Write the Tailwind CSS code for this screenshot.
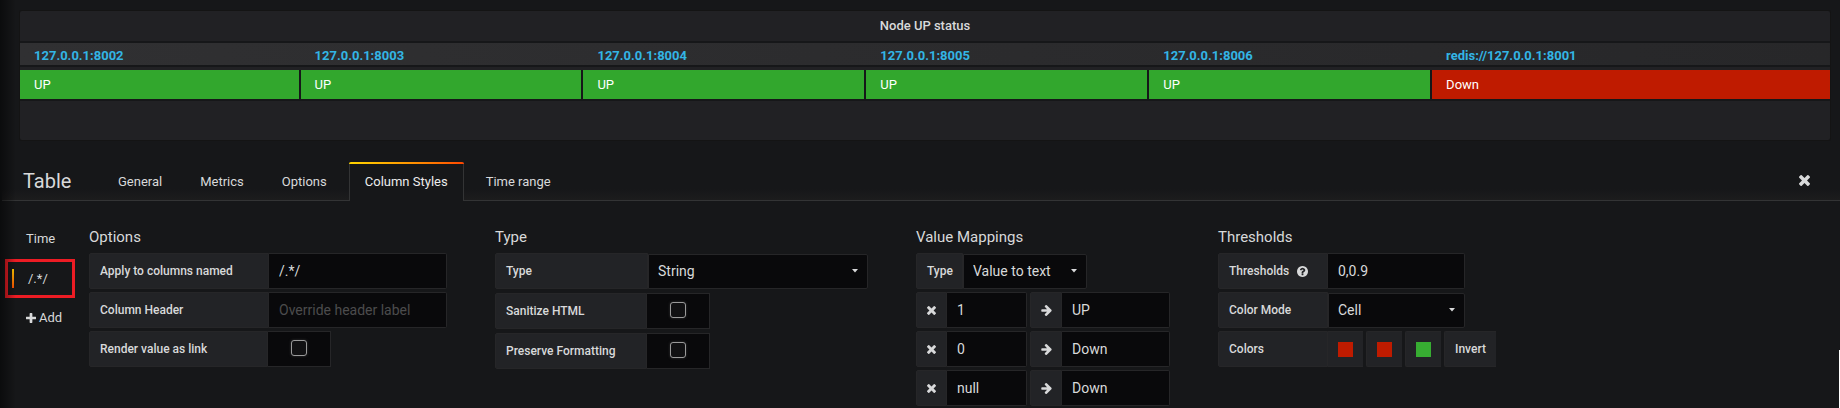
<!DOCTYPE html>
<html lang="en">
<head>
<meta charset="utf-8">
<meta name="viewport" content="width=device-width, initial-scale=1">
<title>Node UP status</title>
<script src="https://cdn.jsdelivr.net/npm/@tailwindcss/browser@4"></script>
</head>
<body class="relative min-h-screen overflow-x-hidden bg-[#161719] font-[Roboto,sans-serif] text-[13px] text-[#d8d9da]">
<svg class="hidden" aria-hidden="true">
  <symbol id="times" viewBox="302 366 1188 1188"><path fill="currentColor" d="M1490 1322q0 40-28 68l-136 136q-28 28-68 28t-68-28l-294-294-294 294q-28 28-68 28t-68-28l-136-136q-28-28-28-68t28-68l294-294-294-294q-28-28-28-68t28-68l136-136q28-28 68-28t68 28l294 294 294-294q28-28 68-28t68 28l136 136q28 28 28 68t-28 68l-294 294 294 294q28 28 28 68z"/></symbol>
  <symbol id="arrow" viewBox="-40 180 1560 1560"><path fill="currentColor" d="M1472 960q0 54-37 91l-651 651q-39 37-91 37-51 0-90-37l-75-75q-38-38-38-91t38-91l293-293h-704q-52 0-84.500-37.500t-32.500-90.500v-128q0-53 32.500-90.500t84.500-37.500h704l-293-294q-38-36-38-90t38-90l75-75q38-38 90-38 53 0 91 38l651 651q37 35 37 90z"/></symbol>
  <symbol id="caret" viewBox="0 0 6 4"><path d="M0 0H6L3 3.6Z" fill="currentColor"/></symbol>
</svg>
<div class="pointer-events-none absolute inset-y-0 left-0 w-4 bg-linear-to-r from-black/50 to-transparent"></div>
<div class="pointer-events-none absolute right-0 bottom-0 h-[58px] w-px bg-white"></div>

<section class="mx-5 mr-[10px] pt-[11px]">
  <div class="h-[129px] rounded-xs bg-[#212124] shadow-[0_0_0_1px_#141414]">
    <h1 class="flex h-[30px] items-center justify-center text-[13px] font-medium">Node UP status</h1>
    <table class="w-full table-fixed border-separate border-spacing-0 border-t-2 border-[#161719] text-left">
      <colgroup>
        <col class="w-[15.5%]"><col class="w-[15.63%]"><col class="w-[15.63%]"><col class="w-[15.63%]"><col class="w-[15.63%]"><col>
      </colgroup>
      <thead class="bg-linear-to-r from-[#303032] to-[#272729] text-[13px] text-[#33b5e5]">
        <tr>
          <th scope="col" class="border-b-2 border-[#161719] pt-1 pl-[14px] leading-[18px] font-bold">127.0.0.1:8002</th>
          <th scope="col" class="border-b-2 border-[#161719] pt-1 pl-[14px] leading-[18px] font-bold">127.0.0.1:8003</th>
          <th scope="col" class="border-b-2 border-[#161719] pt-1 pl-[14px] leading-[18px] font-bold">127.0.0.1:8004</th>
          <th scope="col" class="border-b-2 border-[#161719] pt-1 pl-[14px] leading-[18px] font-bold">127.0.0.1:8005</th>
          <th scope="col" class="border-b-2 border-[#161719] pt-1 pl-[14px] leading-[18px] font-bold">127.0.0.1:8006</th>
          <th scope="col" class="border-b-2 border-[#161719] pt-1 pl-[14px] leading-[18px] font-bold">redis://127.0.0.1:8001</th>
        </tr>
      </thead>
      <tbody class="leading-[29px] text-white before:block before:h-[3px] before:content-['']">
        <tr>
          <td class="border-r-2 border-b-2 border-[#161719] bg-[#32a72d] pl-[14px]">UP</td>
          <td class="border-r-2 border-b-2 border-[#161719] bg-[#32a72d] pl-[14px]">UP</td>
          <td class="border-r-2 border-b-2 border-[#161719] bg-[#32a72d] pl-[14px]">UP</td>
          <td class="border-r-2 border-b-2 border-[#161719] bg-[#32a72d] pl-[14px]">UP</td>
          <td class="border-r-2 border-b-2 border-[#161719] bg-[#32a72d] pl-[14px]">UP</td>
          <td class="border-b-2 border-[#161719] bg-[#bf1b00] pl-[14px]">Down</td>
        </tr>
      </tbody>
    </table>
  </div>
</section>

<header class="mt-[22px] ml-[2px] flex h-[39px] items-stretch border-b border-[#333435] bg-linear-to-b from-[#161719] from-70% to-[#1c1c1d] pr-[30px] pl-[21px]">
  <h2 class="flex w-[79px] items-center text-[20px]">Table</h2>
  <nav class="flex gap-[6px] text-[13px]">
    <a href="#general" class="flex items-center px-4 pt-[2px]">General</a>
    <a href="#metrics" class="flex items-center px-4 pt-[2px]">Metrics</a>
    <a href="#options" class="flex items-center px-4 pt-[2px]">Options</a>
    <a href="#styles" aria-current="page" class="relative -mb-px flex items-center rounded-t-xs border-x border-[#333435] bg-[#161719] px-[15px] pt-px text-[#ececec] before:absolute before:-inset-x-px before:top-0 before:h-[2px] before:rounded-t-xs before:bg-linear-to-r before:from-[#ffd500] before:via-[#ff9900] before:to-[#ff4400]">Column Styles</a>
    <a href="#range" class="flex items-center px-4 pt-[2px]">Time range</a>
  </nav>
  <button type="button" aria-label="Close" class="ml-auto pb-[2px]"><svg class="size-[11px]"><use href="#times"/></svg></button>
</header>

<main class="flex items-start">
  <aside class="flex w-[89px] shrink-0 flex-col pt-[26px] pl-[5px] text-[13px]">
    <a href="#time" class="pl-[21px] leading-6">Time</a>
    <a href="#pattern" aria-current="true" class="mt-2 flex h-[39px] w-[70px] items-center border-[3px] border-[#ed1c24] pl-1"><span class="h-[19px] w-[2px] bg-linear-to-b from-[#ffc800] to-[#ff4d00]"></span><span class="ml-[14px]">/.*/</span></a>
    <button type="button" class="mt-2 flex items-center gap-[3px] pl-[21px] leading-6"><svg class="size-[10px]" viewBox="192 128 1408 1408"><path fill="currentColor" d="M1600 736v192q0 40-28 68t-68 28h-416v416q0 40-28 68t-68 28h-192q-40 0-68-28t-28-68v-416h-416q-40 0-68-28t-28-68v-192q0-40 28-68t68-28h416v-416q0-40 28-68t68-28h192q40 0 68 28t28 68v416h416q40 0 68 28t28 68z"/></svg>Add</button>
  </aside>

  <section class="w-[406px] shrink-0 pt-[26px]">
    <h3 class="mb-[6px] text-[15px] leading-5">Options</h3>
    <div class="grid w-[358px] grid-cols-1 gap-[3px]">
      <div class="flex h-9">
        <label for="apply" class="flex w-[180px] items-center rounded-l-xs border border-[#262628] bg-[#222326] px-[10px] text-[12px] font-medium">Apply to columns named</label>
        <input id="apply" value="/.*/" class="min-w-0 flex-1 rounded-r-xs border border-l-0 border-[#262628] bg-[#09090b] px-[10px] text-[14px]">
      </div>
      <div class="flex h-9">
        <label for="header" class="flex w-[180px] items-center rounded-l-xs border border-[#262628] bg-[#222326] px-[10px] text-[12px] font-medium">Column Header</label>
        <input id="header" placeholder="Override header label" class="min-w-0 flex-1 rounded-r-xs border border-l-0 border-[#262628] bg-[#09090b] px-[10px] text-[14px] placeholder:text-[#4c4c4d]">
      </div>
      <div class="flex h-9">
        <label for="link" class="flex w-[179px] items-center rounded-l-xs border border-[#262628] bg-[#222326] px-[10px] text-[12px] font-medium">Render value as link</label>
        <span class="flex w-[63px] items-start justify-center border border-l-0 border-[#262628] bg-[#09090b] pt-2"><input id="link" type="checkbox" class="size-4 appearance-none rounded-[3px] border border-[#9a9a9a] bg-[#111113] shadow-[0_0_3px_#333] checked:bg-[#33b5e5]"></span>
      </div>
    </div>
  </section>

  <section class="w-[421px] shrink-0 pt-[26px]">
    <h3 class="mb-[6px] text-[15px] leading-5">Type</h3>
    <div class="grid w-[373px] grid-cols-1 gap-1">
      <div class="flex h-9">
        <label for="type" class="flex w-[153px] items-center rounded-l-xs border border-[#262628] bg-[#222326] px-[10px] text-[12px] font-medium">Type</label>
        <div class="relative mt-px flex-1">
          <select id="type" class="size-full appearance-none rounded-r-xs border border-[#262628] bg-[#09090b] px-[9px] text-[14px]"><option>String</option></select>
          <svg class="pointer-events-none absolute top-[15px] right-[10px] h-1 w-[6px]"><use href="#caret"/></svg>
        </div>
      </div>
      <div class="flex h-9">
        <label for="sanitize" class="flex w-[152px] items-center rounded-l-xs border border-[#262628] bg-[#222326] px-[10px] text-[12px] font-medium">Sanitize HTML</label>
        <span class="flex w-[63px] items-start justify-center border border-l-0 border-[#262628] bg-[#09090b] pt-2"><input id="sanitize" type="checkbox" class="size-4 appearance-none rounded-[3px] border border-[#9a9a9a] bg-[#111113] shadow-[0_0_3px_#333] checked:bg-[#33b5e5]"></span>
      </div>
      <div class="flex h-9">
        <label for="preserve" class="flex w-[152px] items-center rounded-l-xs border border-[#262628] bg-[#222326] px-[10px] text-[12px] font-medium">Preserve Formatting</label>
        <span class="flex w-[63px] items-start justify-center border border-l-0 border-[#262628] bg-[#09090b] pt-2"><input id="preserve" type="checkbox" class="size-4 appearance-none rounded-[3px] border border-[#9a9a9a] bg-[#111113] shadow-[0_0_3px_#333] checked:bg-[#33b5e5]"></span>
      </div>
    </div>
  </section>

  <section class="w-[302px] shrink-0 pt-[26px]">
    <h3 class="mb-[6px] text-[15px] leading-5">Value Mappings</h3>
    <div class="grid w-[254px] grid-cols-1 gap-[3px]">
      <div class="flex h-9">
        <label for="maptype" class="flex w-[47px] items-center rounded-l-xs border border-[#262628] bg-[#222326] px-[10px] text-[12px] font-medium">Type</label>
        <div class="relative mt-px w-[124px]">
          <select id="maptype" class="size-full appearance-none rounded-r-xs border border-[#262628] bg-[#09090b] px-[9px] text-[14px]"><option>Value to text</option></select>
          <svg class="pointer-events-none absolute top-[15px] right-[10px] h-1 w-[6px]"><use href="#caret"/></svg>
        </div>
      </div>
      <div class="flex h-9">
        <button type="button" aria-label="Remove mapping" class="flex w-[31px] items-center justify-center rounded-l-xs border border-[#262628] bg-[#222326]"><svg class="size-[9px]"><use href="#times"/></svg></button>
        <input aria-label="Value" value="1" class="w-20 rounded-r-xs border border-l-0 border-[#262628] bg-[#09090b] px-[10px] text-[14px]">
        <span class="ml-[3px] flex w-8 items-center justify-center rounded-l-xs border border-[#262628] bg-[#222326]"><svg class="size-[11px]"><use href="#arrow"/></svg></span>
        <input aria-label="Text" value="UP" class="min-w-0 flex-1 rounded-r-xs border border-l-0 border-[#262628] bg-[#09090b] px-[10px] text-[14px]">
      </div>
      <div class="flex h-9">
        <button type="button" aria-label="Remove mapping" class="flex w-[31px] items-center justify-center rounded-l-xs border border-[#262628] bg-[#222326]"><svg class="size-[9px]"><use href="#times"/></svg></button>
        <input aria-label="Value" value="0" class="w-20 rounded-r-xs border border-l-0 border-[#262628] bg-[#09090b] px-[10px] text-[14px]">
        <span class="ml-[3px] flex w-8 items-center justify-center rounded-l-xs border border-[#262628] bg-[#222326]"><svg class="size-[11px]"><use href="#arrow"/></svg></span>
        <input aria-label="Text" value="Down" class="min-w-0 flex-1 rounded-r-xs border border-l-0 border-[#262628] bg-[#09090b] px-[10px] text-[14px]">
      </div>
      <div class="flex h-9">
        <button type="button" aria-label="Remove mapping" class="flex w-[31px] items-center justify-center rounded-l-xs border border-[#262628] bg-[#222326]"><svg class="size-[9px]"><use href="#times"/></svg></button>
        <input aria-label="Value" value="null" class="w-20 rounded-r-xs border border-l-0 border-[#262628] bg-[#09090b] px-[10px] text-[14px]">
        <span class="ml-[3px] flex w-8 items-center justify-center rounded-l-xs border border-[#262628] bg-[#222326]"><svg class="size-[11px]"><use href="#arrow"/></svg></span>
        <input aria-label="Text" value="Down" class="min-w-0 flex-1 rounded-r-xs border border-l-0 border-[#262628] bg-[#09090b] px-[10px] text-[14px]">
      </div>
    </div>
  </section>

  <section class="pt-[26px]">
    <h3 class="mb-[6px] text-[15px] leading-5">Thresholds</h3>
    <div class="grid gap-[3px]">
      <div class="flex h-9">
        <label for="thresholds" class="flex w-[110px] items-center gap-2 rounded-l-xs border border-[#262628] bg-[#222326] px-[10px] text-[12px] font-medium">Thresholds
          <svg class="size-[11px]" viewBox="128 128 1536 1536" aria-hidden="true"><path fill="currentColor" d="M1024 1376v-192q0-14-9-23t-23-9h-192q-14 0-23 9t-9 23v192q0 14 9 23t23 9h192q14 0 23-9t9-23zm256-672q0-88-55.500-163t-138.500-116-170-41q-243 0-371 213-15 24 8 42l132 100q7 6 19 6 16 0 25-12 53-68 86-92 34-24 86-24 48 0 85.500 26t37.500 59q0 38-20 61t-68 45q-63 28-115.500 86.500t-52.500 125.500v36q0 14 9 23t23 9h192q14 0 23-9t9-23q0-19 21.500-49.500t54.500-49.500q32-18 49-28.500t46-35 44.500-48 28-60.500 12.500-81zm384 192q0 209-103 385.500t-279.500 279.500-385.500 103-385.500-103-279.500-279.500-103-385.500 103-385.500 279.500-279.500 385.500-103 385.500 103 279.500 279.500 103 385.500z"/></svg>
        </label>
        <input id="thresholds" value="0,0.9" class="w-[137px] rounded-r-xs border border-l-0 border-[#262628] bg-[#09090b] px-[10px] text-[14px]">
      </div>
      <div class="flex h-9">
        <label for="mode" class="flex w-[110px] items-center rounded-l-xs border border-[#262628] bg-[#222326] px-[10px] text-[12px] font-medium">Color Mode</label>
        <div class="relative mt-px w-[137px]">
          <select id="mode" class="size-full appearance-none rounded-r-xs border border-[#262628] bg-[#09090b] px-[9px] text-[14px]"><option>Cell</option></select>
          <svg class="pointer-events-none absolute top-[15px] right-[10px] h-1 w-[6px]"><use href="#caret"/></svg>
        </div>
      </div>
      <div class="flex h-9 gap-[3px]">
        <div class="flex">
          <span class="flex w-[110px] items-center rounded-l-xs border border-[#262628] bg-[#222326] px-[10px] text-[12px] font-medium">Colors</span>
          <button type="button" aria-label="First color" class="flex w-[35px] items-center border-y border-[#262628] bg-[#222326] pl-[10px]"><span class="size-[15px] bg-[#bf1b00]"></span></button>
        </div>
        <button type="button" aria-label="Second color" class="flex w-9 items-center rounded-l-xs border border-r-0 border-[#262628] bg-[#222326] pl-[10px]"><span class="size-[15px] bg-[#bf1b00]"></span></button>
        <button type="button" aria-label="Third color" class="flex w-9 items-center rounded-l-xs border border-r-0 border-[#262628] bg-[#222326] pl-[10px]"><span class="size-[15px] bg-[#37ad32]"></span></button>
        <button type="button" class="w-[52px] rounded-l-xs border border-r-0 border-[#262628] bg-[#222326] text-[12px] font-medium">Invert</button>
      </div>
    </div>
  </section>
</main>
</body>
</html>
